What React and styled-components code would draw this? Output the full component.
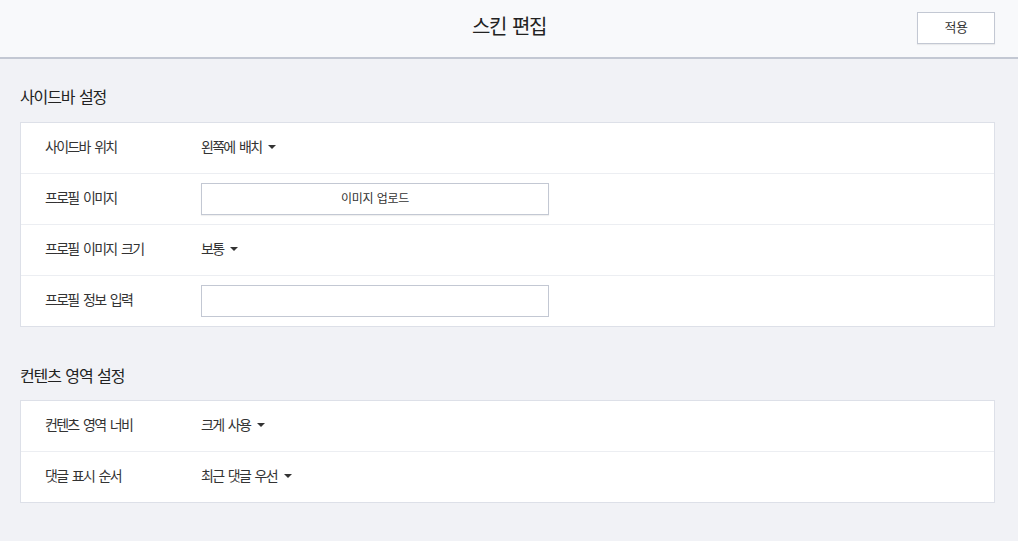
import React from "react";
import styled, { createGlobalStyle } from "styled-components";

const Global = createGlobalStyle`
  html, body { margin: 0; padding: 0; background: #f1f2f6; }
  body { font-family: "Noto Sans CJK KR", "Noto Sans", sans-serif; color: #333; }
  * { box-sizing: border-box; }
`;

const Page = styled.div`
  min-height: 541px;
  background: #f1f2f6;
`;

const Header = styled.header`
  height: 59px;
  background: #f8f9fb;
  border-bottom: 2px solid #c3c8d3;
  display: flex;
  align-items: center;
  justify-content: center;
  position: relative;
`;

const Title = styled.h1`
  margin: 0 0 6px;
  font-size: 20px;
  font-weight: 400;
  letter-spacing: -1.4px;
  word-spacing: 3px;
  color: #222;
  line-height: 1;
`;

const ApplyButton = styled.button`
  position: absolute;
  right: 23px;
  top: 12px;
  width: 78px;
  height: 32px;
  background: #fff;
  border: 1px solid #c3c8d3;
  box-shadow: 0 1px 1px rgba(0, 0, 0, 0.06);
  font-family: inherit;
  font-size: 13px;
  letter-spacing: -0.4px;
  color: #333;
  cursor: pointer;
  padding: 0 0 3px;
`;

const Main = styled.main`
  padding: 0 23px 0 20px;
`;

const SectionTitle = styled.h2`
  margin: ${(p) => p.$top}px 0 ${(p) => p.$bottom}px;
  font-size: 16px;
  font-weight: 400;
  letter-spacing: -1.1px;
  word-spacing: 2px;
  line-height: 24px;
  color: #222;
`;

const Card = styled.div`
  background: #fff;
  border: 1px solid #dde0e8;
`;

const Row = styled.div`
  display: flex;
  align-items: center;
  height: 51px;
  padding: 0 24px;
  border-top: 1px solid #eceef2;
  &:first-child { border-top: none; height: 50px; }
`;

const Label = styled.div`
  width: 156px;
  font-size: 14px;
  letter-spacing: -1.7px;
  word-spacing: 3px;
  color: #333;
  margin-bottom: 4px;
`;

const Select = styled.div`
  display: flex;
  align-items: center;
  gap: 7px;
  font-size: 14px;
  letter-spacing: -1.7px;
  word-spacing: 3px;
  color: #333;
  cursor: pointer;
  margin-bottom: 4px;
`;

const Caret = styled.span`
  width: 0;
  height: 0;
  border-left: 4px solid transparent;
  border-right: 4px solid transparent;
  border-top: 4px solid #333;
  margin-top: 1px;
`;

const UploadButton = styled.button`
  width: 348px;
  height: 32px;
  background: #fff;
  border: 1px solid #c3c8d3;
  box-shadow: 0 1px 1px rgba(0, 0, 0, 0.06);
  font-family: inherit;
  font-size: 12px;
  letter-spacing: -0.3px;
  word-spacing: 1px;
  color: #333;
  padding: 0 0 3px;
`;

const TextInput = styled.input`
  width: 348px;
  height: 32px;
  background: #fff;
  border: 1px solid #c3c8d3;
  font-family: inherit;
  font-size: 13px;
  padding: 0 10px;
  outline: none;
`;

const Dropdown = ({ children }) => (
  <Select>
    {children}
    <Caret />
  </Select>
);

export default function App() {
  return (
    <Page>
      <Global />
      <Header>
        <Title>스킨 편집</Title>
        <ApplyButton>적용</ApplyButton>
      </Header>
      <Main>
        <SectionTitle $top={25} $bottom={14}>사이드바 설정</SectionTitle>
        <Card>
          <Row>
            <Label>사이드바 위치</Label>
            <Dropdown>왼쪽에 배치</Dropdown>
          </Row>
          <Row>
            <Label>프로필 이미지</Label>
            <UploadButton>이미지 업로드</UploadButton>
          </Row>
          <Row>
            <Label>프로필 이미지 크기</Label>
            <Dropdown>보통</Dropdown>
          </Row>
          <Row>
            <Label>프로필 정보 입력</Label>
            <TextInput type="text" />
          </Row>
        </Card>
        <SectionTitle $top={36} $bottom={13}>컨텐츠 영역 설정</SectionTitle>
        <Card>
          <Row>
            <Label>컨텐츠 영역 너비</Label>
            <Dropdown>크게 사용</Dropdown>
          </Row>
          <Row>
            <Label>댓글 표시 순서</Label>
            <Dropdown>최근 댓글 우선</Dropdown>
          </Row>
        </Card>
      </Main>
    </Page>
  );
}
